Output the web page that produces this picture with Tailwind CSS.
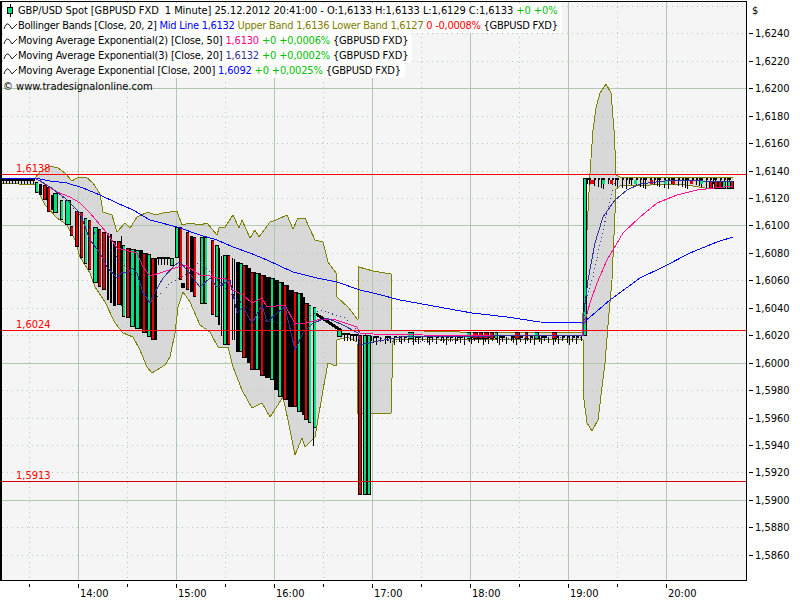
<!DOCTYPE html>
<html lang="en">
<head>
  <meta charset="UTF-8" />
  <title>GBP/USD Spot</title>
  <script src="https://cdn.jsdelivr.net/npm/@tailwindcss/browser@4"></script>
</head>
<body class="bg-white text-black font-['DejaVu_Sans_Condensed','DejaVu_Sans',sans-serif] text-[11px] overflow-hidden">
  <div class="relative w-[800px] h-[600px]">
    <svg id="chart" width="800" height="600" class="block" shape-rendering="crispEdges"></svg>

    <!-- legend sits over the plot and hides the grid behind each row -->
    <div class="absolute left-[3px] top-[3px] flex flex-col items-start leading-[15px] whitespace-pre">
      <div class="flex h-[15px] bg-white pr-1 tracking-[-0.07px]">
        <svg width="15" height="15" class="shrink-0" shape-rendering="crispEdges">
          <rect x="7" y="1" width="1" height="13" fill="#000" />
          <rect x="4.5" y="4.5" width="5" height="6" fill="#00e080" stroke="#000" />
        </svg>
        <span>GBP/USD Spot [GBPUSD FXD  1 Minute] 25.12.2012 20:41:00 - O:1,6133 H:1,6133 L:1,6129 C:1,6133 <span class="text-[#00c000]">+0 +0%</span></span>
      </div>
      <div class="flex h-[15px] bg-white pr-1 tracking-[-0.27px]">
        <svg width="15" height="15" class="shrink-0"><path d="M1 11 Q3 5 5 6 Q7 7 9 11 L14 6" fill="none" stroke="#222" /></svg>
        <span>Bollinger Bands [Close, 20, 2] <span class="text-[#0000ff]">Mid Line 1,6132</span> <span class="text-[#808000]">Upper Band 1,6136 Lower Band 1,6127</span> <span class="text-[#ff0000]">0 -0,0008%</span> {GBPUSD FXD}</span>
      </div>
      <div class="flex h-[15px] bg-white pr-1 tracking-[-0.18px]">
        <svg width="15" height="15" class="shrink-0"><path d="M1 11 Q3 5 5 6 Q7 7 9 11 L14 6" fill="none" stroke="#222" /></svg>
        <span>Moving Average Exponential(2) [Close, 50] <span class="text-[#ff0080]">1,6130</span> <span class="text-[#00c000]">+0 +0,0006%</span> {GBPUSD FXD}</span>
      </div>
      <div class="flex h-[15px] bg-white pr-1 tracking-[-0.18px]">
        <svg width="15" height="15" class="shrink-0"><path d="M1 11 Q3 5 5 6 Q7 7 9 11 L14 6" fill="none" stroke="#222" /></svg>
        <span>Moving Average Exponential(3) [Close, 20] <span class="text-[#333399]">1,6132</span> <span class="text-[#00c000]">+0 +0,0002%</span> {GBPUSD FXD}</span>
      </div>
      <div class="flex h-[15px] bg-white pr-1 tracking-[-0.18px]">
        <svg width="15" height="15" class="shrink-0"><path d="M1 11 Q3 5 5 6 Q7 7 9 11 L14 6" fill="none" stroke="#222" /></svg>
        <span>Moving Average Exponential [Close, 200] <span class="text-[#0000ff]">1,6092</span> <span class="text-[#00c000]">+0 +0,0025%</span> {GBPUSD FXD}</span>
      </div>
      <div class="h-[17px] pt-[1px]">© www.tradesignalonline.com</div>
    </div>
  </div>

  <script>
    const svg = document.getElementById("chart");
    const NS = "http://www.w3.org/2000/svg";

    function add(tag, attrs, text) {
      const el = document.createElementNS(NS, tag);
      for (const k in attrs) el.setAttribute(k, attrs[k]);
      if (text) el.textContent = text;
      svg.appendChild(el);
      return el;
    }
    const line = (x1, y1, x2, y2, stroke, extra) =>
      add("line", { x1, y1, x2, y2, stroke, ...extra });
    const rect = (x, y, width, height, fill) => add("rect", { x, y, width, height, fill });
    const pts = (a) => a.map((p) => p.join(",")).join(" ");

    const GRID = "#b0c8b0";
    const DOTS = { "stroke-dasharray": "1 4" };

    // band outlines, read off the picture
    const upper = [[2,178],[35,178],[40,172],[50,166],[58,168],[65,173],[72,181],[77,178],[86,177],[93,183],[100,194],[103,212],[112,215],[117,232],[125,223],[130,228],[137,217],[148,212],[155,215],[163,213],[177,211],[182,225],[190,223],[200,225],[207,223],[217,235],[219,228],[225,227],[233,215],[239,228],[242,220],[250,238],[255,230],[259,237],[270,222],[276,220],[287,215],[293,229],[298,218],[305,218],[315,240],[323,242],[328,262],[336,273],[337,297],[348,307],[358,320],[359,267],[373,271],[391,274],[392,330],[423,331],[460,332],[553,332],[582,332],[583,313],[585,280],[587,230],[590,173],[593,130],[596,108],[600,93],[606,84],[611,93],[614,130],[615,150],[616,175],[620,177],[643,177],[680,177],[707,177],[733,177]];
    const lower = [[733,189],[705,188],[680,184],[620,186],[615,190],[615,213],[612,280],[609,313],[605,363],[598,420],[592,431],[587,423],[584,400],[583,340],[500,339],[393,340],[393,343],[391,413],[358,413],[357,342],[347,337],[337,340],[336,366],[328,363],[323,390],[315,437],[305,447],[302,438],[295,455],[288,420],[283,397],[270,417],[262,403],[252,408],[242,390],[233,367],[228,347],[218,347],[210,332],[200,325],[190,302],[183,292],[178,307],[175,333],[170,357],[165,365],[152,373],[147,367],[140,350],[133,337],[123,333],[115,323],[105,302],[95,287],[90,273],[80,257],[75,240],[67,225],[57,218],[45,205],[35,185],[2,183]];

    rect(2, 2, 744, 578, "#f5f5f5");
    add("polygon", { points: pts(upper.concat(lower)), fill: "#d8d8d8", stroke: "none" });

    // grid
    for (let i = 0; i < 7; i++) {
      line(78 + i * 98, 2, 78 + i * 98, 580, GRID);
      line(29 + i * 98, 2, 29 + i * 98, 580, GRID, DOTS);
      line(29 + i * 98, 584, 29 + i * 98, 587, "#000");
      line(78 + i * 98, 584, 78 + i * 98, 588, "#000");
      add("text", { x: 80 + i * 98, y: 597 }, (14 + i) + ":00");
    }
    for (let i = 0; i < 21; i++) {
      const y = Math.round(5.8 + i * 27.45);
      line(2, y, 746, y, GRID, (i - 3) % 5 === 0 ? {} : DOTS);
      if (i > 0) {
        line(749, y, 753, y, "#000");
        const v = (16260 - i * 20).toString();
        add("text", { x: 755, y: y + 4 }, v[0] + "," + v.slice(1));
      }
    }
    add("text", { x: 752, y: 14 }, "$");

    add("polyline", { points: pts(upper), fill: "none", stroke: "#808000" });
    add("polyline", { points: pts(lower), fill: "none", stroke: "#808000" });

    // candles: x, width, top, bottom, kind
    const FILL = { g: "#00e080", r: "#e80000", k: "#000" };
    const big = [[35,3,182,193,"g"],[39,3,184,195,"k"],[43,4,185,200,"r"],[47,3,187,212,"r"],[51,2,195,210,"k"],[53,5,193,213,"g"],[60,3,200,220,"g"],[65,6,200,225,"g"],[70,3,226,236,"r"],[75,4,211,247,"r"],[80,3,212,258,"r"],[84,3,218,264,"g"],[88,3,220,270,"r"],[93,5,227,283,"g"],[98,3,229,287,"r"],[102,4,232,290,"r"],[107,2,233,300,"k"],[113,3,241,306,"k"],[117,4,241,305,"r"],[122,3,245,317,"g"],[126,4,248,318,"r"],[130,5,249,327,"g"],[135,5,250,329,"g"],[142,4,253,333,"r"],[147,4,254,337,"g"],[151,4,258,340,"r"],[155,2,258,340,"k"],[170,4,258,266,"g"],[175,4,227,258,"g"],[179,3,227,280,"r"],[181,4,283,288,"k"],[186,3,232,290,"r"],[190,3,236,292,"k"],[193,3,237,297,"r"],[200,4,237,304,"g"],[204,3,237,304,"g"],[211,3,240,315,"r"],[215,4,245,317,"g"],[218,2,248,325,"k"],[223,4,255,345,"g"],[227,3,255,345,"r"],[236,2,262,352,"k"],[239,3,263,352,"g"],[242,3,265,358,"r"],[247,3,268,363,"k"],[250,3,272,370,"r"],[255,3,273,370,"g"],[260,3,275,376,"r"],[265,3,277,378,"k"],[270,3,278,380,"g"],[274,3,280,390,"k"],[278,3,282,397,"g"],[283,4,285,400,"r"],[288,2,290,407,"k"],[293,3,292,407,"r"],[297,3,293,412,"g"],[302,3,297,415,"k"],[304,3,303,420,"r"],[308,3,305,423,"g"],[313,3,307,428,"g"],[337,5,330,337,"g"],[358,4,335,495,"r"],[363,4,335,495,"g"],[367,4,335,495,"g"],[583,4,178,336,"g"]];

    // the busy stretches close up into solid black between bars
    const solid = [[125, 147], [236, 306]];
    big.forEach(([x, w, t, b], i) => {
      const next = big[i + 1];
      if (next && solid.some(([a, z]) => x >= a && x < z)) rect(x, t, next[0] - x + 1, b - t, "#000");
    });

    // thin wicks on the quiet stretches
    line(2, 180, 35, 180, "#000", { "stroke-width": 2 });
    for (let x = 3; x < 35; x += 3) line(x, 179, x, 184, "#000");
    line(157, 258, 170, 258, "#000", { "stroke-width": 2 });
    for (let x = 158; x < 170; x += 3) line(x, 258, x, 265, "#000");
    [110, 111, 121, 234, 221, 232].forEach((x) => line(x, 232 + (x - 100) * 0.2, x, 300 + (x - 100) * 0.3, "#000"));
    line(313, 428, 313, 446, "#000");
    line(316, 314, 342, 331, "#000", { "stroke-width": 3 });
    line(342, 334, 358, 335, "#000", { "stroke-width": 2 });
    for (let x = 344; x < 358; x += 3) line(x, 334, x, 341, "#000");
    for (let x = 371, i = 0; x < 583; x += 2 + (i * 5) % 4, i++) {
      line(x, 336 + (i % 2), x, 341 + (i * 7) % 5, "#000");
      if (i % 3) line(x, 337, x + 3, 337, "#000", { "stroke-width": 2 });
    }
    [[408,5,"g"],[467,3,"g"],[473,4,"r"],[479,3,"r"],[484,4,"r"],[490,3,"r"],[495,2,"g"],[515,4,"r"],[552,4,"r"],[525,2,"r"],[535,3,"g"]].forEach(([x, w, k]) => {
      rect(x, 332, w + 1, 7, "#000");
      rect(x, 333, w, 5, FILL[k]);
    });
    for (let x = 587, i = 0; x < 734; x += 2 + (i * 3) % 4, i++) {
      line(x, 179, x + 2, 179, "#000", { "stroke-width": 2 });
      line(x, 178, x, 184 + (i * 7) % 6, "#000");
    }
    [[590,4,"r"],[602,3,"g"],[610,3,"r"],[634,3,"g"],[650,3,"r"],[664,3,"g"],[672,3,"r"],[690,3,"r"],[700,3,"g"]].forEach(([x, w, k]) => {
      rect(x, 180, w, 4, FILL[k]);
    });
    [[710,"r"],[715,"r"],[719,"r"],[723,"g"],[728,"g"],[731,"r"]].forEach(([x, k]) => {
      rect(x - 1, 181, 4, 8, "#000");
      rect(x, 182, 2, 6, FILL[k]);
    });

    big.forEach(([x, w, t, b, k]) => {
      rect(x, t, w, b - t, "#000");
      if (w > 2 && k !== "k") rect(x + 1, t + 1, Math.max(w - 2, 2), b - t - 2, FILL[k]);
    });

    // averages
    const ma200 = [[2,178],[35,178],[50,181],[67,183],[83,188],[100,195],[117,203],[133,210],[150,220],[177,227],[200,235],[217,240],[233,247],[250,253],[267,260],[293,272],[317,278],[337,282],[360,290],[373,293],[400,300],[472,313],[507,317],[540,322],[582,323],[583,323],[610,300],[640,278],[663,267],[690,253],[717,242],[733,237]];
    const ma50 = [[35,178],[43,183],[57,192],[70,197],[80,203],[90,213],[100,225],[107,233],[117,248],[125,250],[137,253],[143,267],[150,276],[163,272],[175,268],[185,265],[200,275],[207,275],[217,278],[225,278],[233,290],[243,295],[252,303],[262,298],[267,307],[285,305],[295,324],[305,323],[317,320],[333,319],[357,327],[360,333],[373,334],[423,335],[507,336],[582,336],[583,328],[590,303],[597,283],[607,260],[623,233],[640,217],[657,203],[677,195],[697,190],[733,186]];
    const ma20 = [[35,178],[50,187],[65,198],[80,213],[90,240],[100,253],[107,267],[117,278],[122,272],[127,273],[132,268],[137,273],[143,293],[150,303],[155,292],[163,278],[175,265],[180,262],[187,270],[200,287],[210,278],[217,287],[230,280],[237,313],[243,307],[252,323],[262,305],[267,322],[277,313],[285,307],[295,350],[303,333],[313,323],[327,318],[343,325],[358,333],[360,345],[373,342],[400,337],[583,335],[583,320],[588,280],[595,243],[603,217],[615,200],[627,190],[640,184],[673,180],[733,182]];
    const mid = [[40,180],[60,195],[80,215],[100,240],[120,260],[140,285],[150,303],[163,292],[170,283],[185,275],[200,262],[232,295],[262,320],[296,325],[320,310],[345,318],[360,333],[395,342],[583,337],[585,303],[593,277],[600,243],[607,213],[615,183]];

    add("polyline", { points: pts(mid), fill: "none", stroke: "#333399", "stroke-dasharray": "1 3" });
    add("polyline", { points: pts(ma200), fill: "none", stroke: "#0000ff" });
    add("polyline", { points: pts(ma50), fill: "none", stroke: "#ff1090" });
    add("polyline", { points: pts(ma20), fill: "none", stroke: "#333399" });

    // horizontal levels
    [[174, "1,6138", "#ff0000"], [330, "1,6024", "#ff0000"], [481, "1,5913", "#d80000"]].forEach(([y, label, c]) => {
      line(2, y, 746, y, c);
      add("text", { x: 16, y: y - 2, fill: "#ff0000" }, label);
    });

    // frame
    line(1, 1, 747, 1, "#000");
    line(1, 1, 1, 581, "#000", { "stroke-width": 2 });
    line(746, 1, 746, 581, "#000");
    line(1, 580, 747, 580, "#000");
  </script>
</body>
</html>
